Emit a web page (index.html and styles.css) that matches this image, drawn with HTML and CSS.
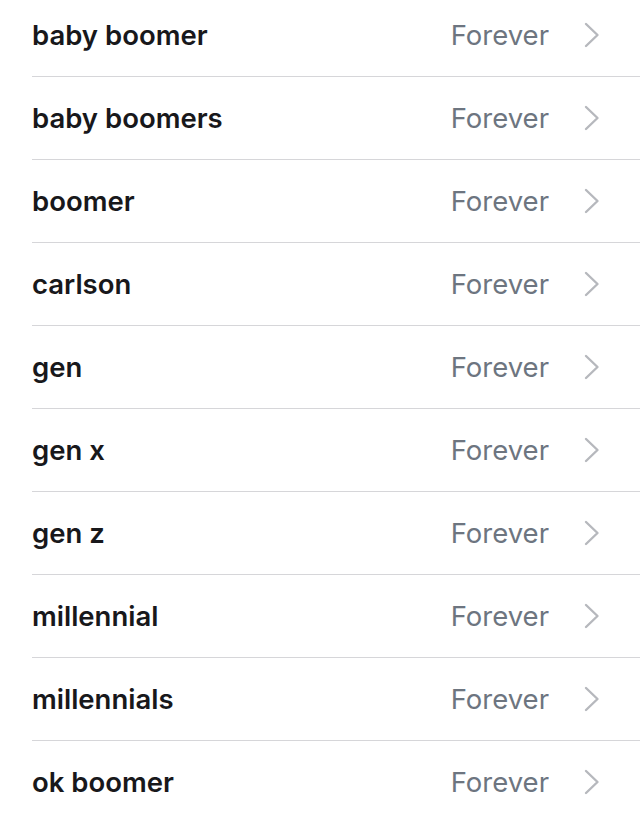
FILE: index.html
```html
<!DOCTYPE html>
<html>
<head>
<meta charset="utf-8">
<link rel="stylesheet" href="styles.css">
</head>
<body>
<ul class="list">
  <li class="row"><span class="term">baby boomer</span><span class="dur">Forever</span><svg class="chev" viewBox="0 0 16 26"><path d="M2 2 L13.5 13 L2 24"/></svg></li>
  <li class="row"><span class="term">baby boomers</span><span class="dur">Forever</span><svg class="chev" viewBox="0 0 16 26"><path d="M2 2 L13.5 13 L2 24"/></svg></li>
  <li class="row"><span class="term">boomer</span><span class="dur">Forever</span><svg class="chev" viewBox="0 0 16 26"><path d="M2 2 L13.5 13 L2 24"/></svg></li>
  <li class="row"><span class="term">carlson</span><span class="dur">Forever</span><svg class="chev" viewBox="0 0 16 26"><path d="M2 2 L13.5 13 L2 24"/></svg></li>
  <li class="row"><span class="term">gen</span><span class="dur">Forever</span><svg class="chev" viewBox="0 0 16 26"><path d="M2 2 L13.5 13 L2 24"/></svg></li>
  <li class="row"><span class="term">gen x</span><span class="dur">Forever</span><svg class="chev" viewBox="0 0 16 26"><path d="M2 2 L13.5 13 L2 24"/></svg></li>
  <li class="row"><span class="term">gen z</span><span class="dur">Forever</span><svg class="chev" viewBox="0 0 16 26"><path d="M2 2 L13.5 13 L2 24"/></svg></li>
  <li class="row"><span class="term">millennial</span><span class="dur">Forever</span><svg class="chev" viewBox="0 0 16 26"><path d="M2 2 L13.5 13 L2 24"/></svg></li>
  <li class="row"><span class="term">millennials</span><span class="dur">Forever</span><svg class="chev" viewBox="0 0 16 26"><path d="M2 2 L13.5 13 L2 24"/></svg></li>
  <li class="row"><span class="term">ok boomer</span><span class="dur">Forever</span><svg class="chev" viewBox="0 0 16 26"><path d="M2 2 L13.5 13 L2 24"/></svg></li>
</ul>
</body>
</html>
```
FILE: styles.css
```css
html, body {
  margin: 0;
  padding: 0;
  background: #ffffff;
  overflow: hidden;
}
.list {
  list-style: none;
  margin: -6px 0 0 32px;
  padding: 0;
  font-family: Inter, "Liberation Sans", sans-serif;
}
.row {
  display: flex;
  align-items: center;
  height: 82px;
  border-bottom: 1.5px solid #d6d6d9;
  padding-right: 40px;
}
.term {
  flex: 1;
  font-size: 27.5px;
  font-weight: 600;
  color: #18181b;
}
.dur {
  font-size: 27.5px;
  font-weight: 400;
  color: #6d7580;
  margin-right: 35px;
}
.chev {
  width: 16px;
  height: 26px;
}
.chev path {
  fill: none;
  stroke: #b6b8bd;
  stroke-width: 2.4;
  stroke-linecap: round;
  stroke-linejoin: round;
}
```
